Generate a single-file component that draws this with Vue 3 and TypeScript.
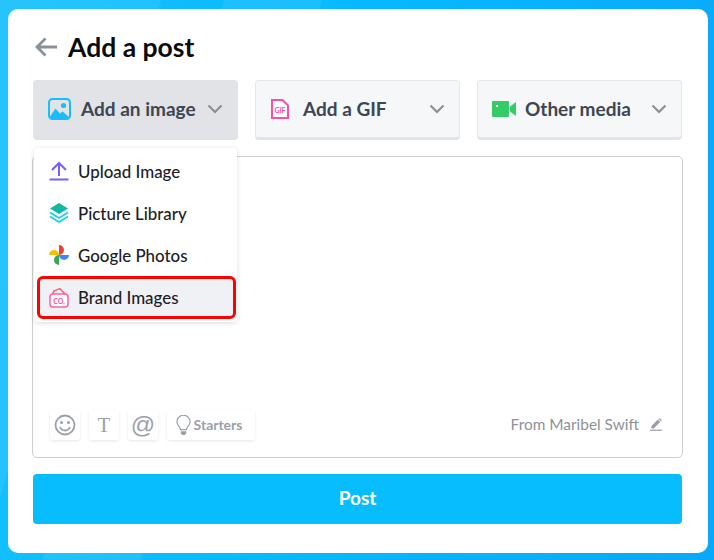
<script setup lang="ts">
const tools = ['smile', 'text', 'at']
</script>

<template>
  <main class="page">
    <section class="card">
      <header class="head">
        <svg class="back" viewBox="0 0 22 20" width="22" height="20"><path d="M10.500 1.500 2 10l8.500 8.500M3 10H22" fill="none" stroke="#8a9099" stroke-width="2.800"/></svg>
        <h1>Add a post</h1>
      </header>

      <div class="tabs">
        <button class="tab active">
          <svg viewBox="0 0 23 22" width="23" height="22"><rect x="1" y="1" width="21" height="20" rx="3.500" fill="none" stroke="#19bdf9" stroke-width="2"/><circle cx="15.500" cy="7.500" r="2.600" fill="#19bdf9"/><path d="M2 18.500 7.500 10.500l4.500 5 2.500-2 6.500 5.500v1H3z" fill="#19bdf9"/></svg>
          <span>Add an image</span>
          <svg class="chev" viewBox="0 0 16 10" width="16" height="10"><path d="M1.500 1.500 8 8l6.500-6.500" fill="none" stroke="#8b9097" stroke-width="2.200"/></svg>
        </button>
        <button class="tab">
          <svg class="gif-icon" viewBox="0 0 18 20" width="18" height="20"><path d="M1 1h10.500L17 6.500V19H1z" fill="#fff" stroke="#ff4da6" stroke-width="2"/><text x="9" y="14" text-anchor="middle" class="gif">GIF</text></svg>
          <span class="gif-label">Add a GIF</span>
          <svg class="chev" viewBox="0 0 16 10" width="16" height="10"><path d="M1.500 1.500 8 8l6.500-6.500" fill="none" stroke="#8b9097" stroke-width="2.200"/></svg>
        </button>
        <button class="tab media">
          <svg viewBox="0 0 24 16" width="24" height="16"><path d="M1 0h15a1 1 0 0 1 1 1v14a1 1 0 0 1-1 1H1a1 1 0 0 1-1-1V1a1 1 0 0 1 1-1zM18 5.500 24 1v14l-6-4.500z" fill="#33cc66"/><rect x="4" y="4" width="2" height="2" fill="#fff"/></svg>
          <span>Other media</span>
          <svg class="chev" viewBox="0 0 16 10" width="16" height="10"><path d="M1.500 1.500 8 8l6.500-6.500" fill="none" stroke="#8b9097" stroke-width="2.200"/></svg>
        </button>
      </div>

      <div class="editor">
        <div class="foot">
          <div class="tools">
            <button v-for="t in tools" :key="t" class="tool">
              <svg v-if="t === 'smile'" viewBox="0 0 22 22" width="22" height="22"><circle cx="11" cy="11" r="9.500" fill="none" stroke="#9aa0a8" stroke-width="1.800"/><circle cx="7.500" cy="8.500" r="1.500" fill="#9aa0a8"/><circle cx="14.500" cy="8.500" r="1.500" fill="#9aa0a8"/><path d="M6 13c1 2.500 3 3.500 5 3.500s4-1 5-3.500" fill="none" stroke="#9aa0a8" stroke-width="1.800"/></svg>
              <span v-else-if="t === 'text'" class="serif-t">T</span>
              <span v-else class="at">@</span>
            </button>
            <button class="tool starters">
              <svg viewBox="0 0 16 22" width="15" height="21"><path d="M5 15.500C5 12.500 1 11.500 1 7a7 7 0 0 1 14 0c0 4.500-4 5.500-4 8.500z" fill="none" stroke="#9aa0a8" stroke-width="1.300"/><path d="M5 17h6v2l-1.500 2h-3L5 19z" fill="#9aa0a8"/></svg>
              <span>Starters</span>
            </button>
          </div>
          <div class="from">
            <span>From Maribel Swift</span>
            <svg viewBox="0 0 14 14" width="13" height="13"><path d="M1.500 9.200 8.500 2.200l2.500 2.500-7 7H1.500zM9.300 1.500l1-1 2.500 2.500-1 1z" fill="#9aa0a8" transform="translate(0 -.5)"/><rect x="0" y="12.500" width="13" height="1.300" fill="#9aa0a8"/></svg>
          </div>
        </div>
      </div>

      <button class="post">Post</button>

      <ul class="menu">
        <li class="item">
          <svg viewBox="0 0 20 20" width="20" height="20"><path d="M10 15V2M3 9l7-7 7 7M0.500 18.500h19" fill="none" stroke="#7a5cff" stroke-width="2"/></svg>
          <span>Upload Image</span>
        </li>
        <li class="item">
          <svg viewBox="0 0 20 20" width="20" height="20"><defs><linearGradient id="lay" x1="0" y1="0" x2="1" y2="1"><stop offset="0" stop-color="#10b98a"/><stop offset="1" stop-color="#14b8c0"/></linearGradient></defs><path d="M10 0l9 5.500-9 5.500-9-5.500z" fill="url(#lay)"/><path d="M1 9.500l9 5.500 9-5.500M1 13.500l9 5.500 9-5.500" fill="none" stroke="#1ccfe8" stroke-width="1.800"/></svg>
          <span>Picture Library</span>
        </li>
        <li class="item">
          <svg viewBox="0 0 20 20" width="20" height="20"><path d="M10 10H0a5 5 0 0 1 10 0z" fill="#fbbc04"/><path d="M10 10V0a5 5 0 0 1 0 10z" fill="#ea4335"/><path d="M10 10h10a5 5 0 0 1-10 0z" fill="#4285f4"/><path d="M10 10v10a5 5 0 0 1 0-10z" fill="#34a853"/></svg>
          <span>Google Photos</span>
        </li>
        <li class="item marked">
          <svg viewBox="0 0 20 20" width="20" height="20"><rect x="1" y="6" width="18" height="13" rx="3" fill="#fff" stroke="#ff5fa2" stroke-width="1.500"/><path d="M3.500 6 5 3c2-.5 4-2 6-2.300l2 2.300 3 3" fill="none" stroke="#f4606c" stroke-width="1.500"/><text x="10" y="15.500" text-anchor="middle" class="co">CO.</text></svg>
          <span>Brand Images</span>
        </li>
      </ul>
    </section>
  </main>
</template>

<style scoped>
.page {
  width: 714px;
  height: 560px;
  box-sizing: border-box;
  padding: 9px 6px 7px 8px;
  background:
    linear-gradient(108deg, rgba(255, 255, 255, 0.07) 0 18%, transparent 18% 25%, rgba(255, 255, 255, 0.07) 25% 36%, transparent 36%),
    linear-gradient(100deg, #17c0fc 0%, #06b9ff 45%, #0aa8f8 100%);
  font-family: Lato, "Liberation Sans", sans-serif;
}
.card {
  position: relative;
  height: 544px;
  box-sizing: border-box;
  padding: 23px 26px 29px 25px;
  background: #fff;
  border-radius: 10px;
  display: flex;
  flex-direction: column;
}
.head {
  display: flex;
  align-items: center;
  gap: 11px;
  height: 30px;
  margin-bottom: 18px;
}
.back { margin-left: 2px; }
h1 {
  margin: 0;
  font-size: 26.500px;
  font-weight: 700;
  color: #0b0b0d;
}
.tabs {
  display: flex;
  gap: 17px;
}
.tab {
  flex: 1 1 0;
  height: 60px;
  box-sizing: border-box;
  display: flex;
  align-items: center;
  gap: 10px;
  padding: 0 14px;
  background: #f6f7f9;
  border: 1px solid #e6e7ea;
  border-bottom: 3px solid #e2e3e6;
  border-radius: 4px;
  font: 700 19px Lato, "Liberation Sans", sans-serif;
  color: #3d4653;
}
.tab.active {
  background: #e1e3e7;
  border-color: #e1e3e7;
}
.tab.media { gap: 9px; }
.tab span { flex: 1; text-align: left; white-space: nowrap; padding-bottom: 2px; }
.gif-icon { margin-left: 1px; }
.gif-label { padding-left: 4px; }
.chev { flex: none; }
.gif {
  font: 700 7px Lato, sans-serif;
  fill: #ff4da6;
}
.editor {
  flex: 1;
  margin: 16px -1px 16px -1px;
  border: 1px solid #cfcfcf;
  border-radius: 5px;
  display: flex;
  align-items: flex-end;
  padding: 0 19px 17px 17px;
}
.foot {
  width: 100%;
  display: flex;
  justify-content: space-between;
  align-items: center;
}
.tools {
  display: flex;
  gap: 9px;
}
.tool {
  width: 30px;
  height: 30px;
  padding: 0;
  display: flex;
  align-items: center;
  justify-content: center;
  background: #fff;
  border: 0;
  border-radius: 3px;
  box-shadow: 0 1px 3px rgba(0, 0, 0, 0.1);
  color: #9aa0a8;
}
.serif-t {
  font: 21px "Liberation Serif", serif;
}
.at {
  font: 24px "Liberation Sans", sans-serif;
}
.starters {
  width: 88px;
  gap: 3px;
  padding-right: 4px;
  font: 700 14px Lato, sans-serif;
}
.starters span { padding-bottom: 1px; }
.from {
  display: flex;
  align-items: center;
  gap: 11px;
  padding-bottom: 2px;
  font-size: 15.400px;
  color: #8d9299;
}
.post {
  height: 50px;
  flex: none;
  padding: 0 0 3px;
  background: #08bdfd;
  color: #fff;
  border: 0;
  border-radius: 4px;
  font: 700 19px Lato, sans-serif;
}
.menu {
  position: absolute;
  left: 26px;
  top: 139px;
  width: 203px;
  height: 174px;
  box-sizing: border-box;
  margin: 0;
  padding: 2px 0;
  list-style: none;
  background: #fff;
  border-radius: 4px;
  box-shadow: 0 1px 5px rgba(0, 0, 0, 0.14);
}
.item {
  height: 42px;
  box-sizing: border-box;
  display: flex;
  align-items: center;
  gap: 9px;
  padding-left: 15px;
  font-size: 16.900px;
  font-weight: 500;
  color: #1c2026;
}
.marked {
  margin: 0 0 0 3px;
  width: 199px;
  height: 43px;
  padding-left: 9px;
  background: #f0f1f5;
  border: 3px solid #f00;
  border-radius: 6px;
}
.co {
  font: 700 7px Lato, sans-serif;
  fill: #ff4f8e;
}
</style>
